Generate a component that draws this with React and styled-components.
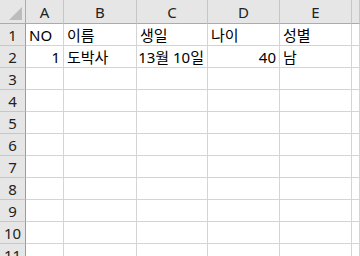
import React from "react";
import styled, { createGlobalStyle } from "styled-components";

const GlobalStyle = createGlobalStyle`
  html, body {
    margin: 0;
    padding: 0;
    background: #ffffff;
  }
  body {
    font-family: "Noto Sans", "Noto Sans CJK KR", sans-serif;
  }
`;

const columns = ["A", "B", "C", "D", "E", ""];
const widths = [26, 38, 73, 71, 72, 72];

const data = [
  [
    { v: "NO" },
    { v: "이름" },
    { v: "생일" },
    { v: "나이" },
    { v: "성별" },
    { v: "" },
  ],
  [
    { v: "1", num: true },
    { v: "도박사" },
    { v: "13월 10일", num: true },
    { v: "40", num: true },
    { v: "남" },
    { v: "" },
  ],
];

const ROWS = 11;

const Sheet = () => {
  return (
    <Grid>
      <Corner>
        <CornerMark />
      </Corner>
      {columns.map((c, i) => (
        <ColHead key={`h${i}`}>{c}</ColHead>
      ))}
      {Array.from({ length: ROWS }).map((_, r) => (
        <React.Fragment key={r}>
          <RowHead>{r + 1}</RowHead>
          {columns.map((_, c) => {
            const cell = (data[r] && data[r][c]) || { v: "" };
            return (
              <Cell key={c} num={cell.num}>
                {cell.v}
              </Cell>
            );
          })}
        </React.Fragment>
      ))}
    </Grid>
  );
};

const Grid = styled.div`
  display: grid;
  grid-template-columns: ${widths.map((w) => `${w}px`).join(" ")} 1fr;
  grid-template-rows: 24px repeat(${ROWS}, 22px);
  width: 360px;
  height: 256px;
  overflow: hidden;
  font-size: 15px;
  color: #000;
`;

const Corner = styled.div`
  position: relative;
  background: #e6e6e6;
  border-right: 1px solid #ababab;
  border-bottom: 1px solid #ababab;
`;

const CornerMark = styled.div`
  position: absolute;
  right: 3px;
  bottom: 3px;
  width: 0;
  height: 0;
  border-style: solid;
  border-width: 0 0 13px 13px;
  border-color: transparent transparent #bcbcbc transparent;
`;

const ColHead = styled.div`
  display: flex;
  align-items: center;
  justify-content: center;
  background: #e6e6e6;
  border-right: 1px solid #c6c6c6;
  border-bottom: 1px solid #ababab;
  color: #222;
  line-height: 1;
  padding-top: 1px;
`;

const RowHead = styled.div`
  display: flex;
  align-items: center;
  justify-content: center;
  background: #e6e6e6;
  border-right: 1px solid #9c9c9c;
  border-bottom: 1px solid #c6c6c6;
  color: #222;
  line-height: 1;
  padding-top: 1px;
`;

const Cell = styled.div`
  display: flex;
  align-items: center;
  justify-content: ${(p) => (p.num ? "flex-end" : "flex-start")};
  padding: 1px 3px 0 3px;
  border-right: 1px solid #d4d4d4;
  border-bottom: 1px solid #d4d4d4;
  white-space: nowrap;
  overflow: visible;
  line-height: 1;
`;

const App = () => (
  <>
    <GlobalStyle />
    <Sheet />
  </>
);

export default App;
